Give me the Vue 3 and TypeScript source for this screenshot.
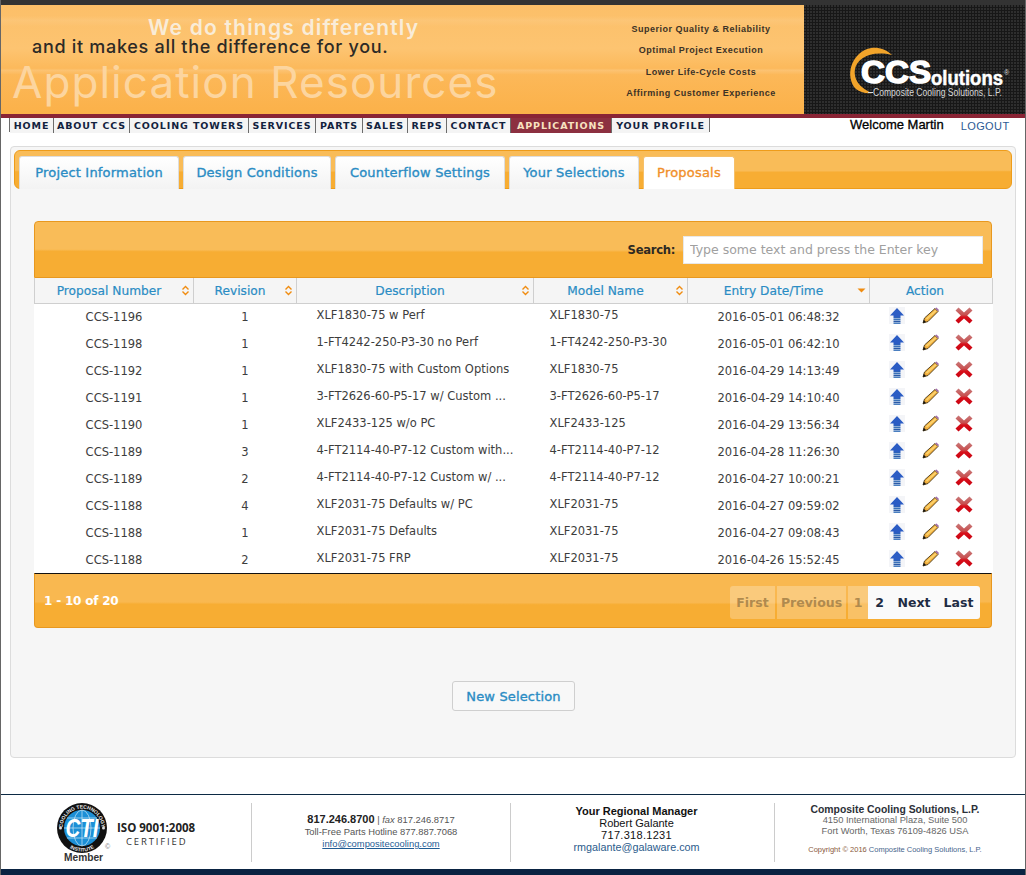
<script setup lang="ts">
interface Proposal {
  number: string
  revision: number
  description: string
  model: string
  entry: string
}

const navItems = ['HOME', 'ABOUT CCS', 'COOLING TOWERS', 'SERVICES', 'PARTS', 'SALES', 'REPS', 'CONTACT', 'APPLICATIONS', 'YOUR PROFILE']
const tabs = ['Project Information', 'Design Conditions', 'Counterflow Settings', 'Your Selections', 'Proposals']
const columns = ['Proposal Number', 'Revision', 'Description', 'Model Name', 'Entry Date/Time', 'Action']
const taglines = ['Superior Quality & Reliability', 'Optimal Project Execution', 'Lower Life-Cycle Costs', 'Affirming Customer Experience']

const rows: Proposal[] = [
  { number: 'CCS-1196', revision: 1, description: 'XLF1830-75 w Perf', model: 'XLF1830-75', entry: '2016-05-01 06:48:32' },
  { number: 'CCS-1198', revision: 1, description: '1-FT4242-250-P3-30 no Perf', model: '1-FT4242-250-P3-30', entry: '2016-05-01 06:42:10' },
  { number: 'CCS-1192', revision: 1, description: 'XLF1830-75 with Custom Options', model: 'XLF1830-75', entry: '2016-04-29 14:13:49' },
  { number: 'CCS-1191', revision: 1, description: '3-FT2626-60-P5-17 w/ Custom ...', model: '3-FT2626-60-P5-17', entry: '2016-04-29 14:10:40' },
  { number: 'CCS-1190', revision: 1, description: 'XLF2433-125 w/o PC', model: 'XLF2433-125', entry: '2016-04-29 13:56:34' },
  { number: 'CCS-1189', revision: 3, description: '4-FT2114-40-P7-12 Custom with...', model: '4-FT2114-40-P7-12', entry: '2016-04-28 11:26:30' },
  { number: 'CCS-1189', revision: 2, description: '4-FT2114-40-P7-12 Custom w/ ...', model: '4-FT2114-40-P7-12', entry: '2016-04-27 10:00:21' },
  { number: 'CCS-1188', revision: 4, description: 'XLF2031-75 Defaults w/ PC', model: 'XLF2031-75', entry: '2016-04-27 09:59:02' },
  { number: 'CCS-1188', revision: 1, description: 'XLF2031-75 Defaults', model: 'XLF2031-75', entry: '2016-04-27 09:08:43' },
  { number: 'CCS-1188', revision: 2, description: 'XLF2031-75 FRP', model: 'XLF2031-75', entry: '2016-04-26 15:52:45' },
]
</script>

<template>
  <div class="page">
    <div class="topbar"></div>

    <header class="banner">
      <div class="banner-art">
        <div class="slogan">
          <div class="slogan-a">We do things differently</div>
          <div class="slogan-b">and it makes all the difference for you.</div>
          <div class="slogan-c">Application Resources</div>
        </div>
        <ul class="taglines">
          <li v-for="t in taglines" :key="t">{{ t }}</li>
        </ul>
      </div>
      <div class="banner-logo">
        <svg width="221" height="109" viewBox="0 0 221 109">
          <path d="M88 50 C78 41 64 40 54 50 C44 60 44 76 52 84 C56 87 62 89 68 88 C58 84 49 76 51 64 C53 54 66 45 88 50Z" fill="#f2a42a" />
          <text x="57" y="78" class="logo-ccs" textLength="70" lengthAdjust="spacingAndGlyphs">CCS</text>
          <text x="127" y="80" class="logo-sol" textLength="72" lengthAdjust="spacingAndGlyphs">olutions</text>
          <text x="200" y="70" class="logo-reg">®</text>
          <rect x="64" y="87" width="5" height="1" fill="#ddd" />
          <text x="69" y="91" class="logo-sub" textLength="129" lengthAdjust="spacingAndGlyphs">Composite Cooling Solutions, L.P.</text>
        </svg>
      </div>
    </header>
    <div class="redline"></div>

    <div class="navrow">
      <nav class="mainnav">
        <a v-for="n in navItems" :key="n" :class="{ current: n === 'APPLICATIONS' }">{{ n }}</a>
      </nav>
      <div class="welcome">Welcome Martin</div>
      <a class="logout">LOGOUT</a>
    </div>

    <main class="panel">
      <div class="tabbar">
        <a v-for="t in tabs" :key="t" class="tab" :class="{ active: t === 'Proposals' }">{{ t }}</a>
      </div>

      <section class="grid-wrap">
        <div class="toolbar">
          <label class="search-label">Search:</label>
          <input class="search" type="text" placeholder="Type some text and press the Enter key" />
        </div>

        <table class="grid">
          <colgroup>
            <col style="width: 159px" />
            <col style="width: 103px" />
            <col style="width: 237px" />
            <col style="width: 154px" />
            <col style="width: 182px" />
            <col style="width: 123px" />
          </colgroup>
          <thead>
            <tr>
              <th v-for="c in columns" :key="c" :class="{ plain: c === 'Action' }">
                {{ c }}
                <svg v-if="c === 'Entry Date/Time'" class="sort" width="9" height="11" viewBox="0 0 9 11">
                  <path d="M0.500 3.500H8.500L4.500 7.500Z" fill="#f08c10" />
                </svg>
                <svg v-else-if="c !== 'Action'" class="sort" width="9" height="11" viewBox="0 0 9 11">
                  <path d="M1.500 4.500L4.500 1.500L7.500 4.500M1.500 6.500L4.500 9.500L7.500 6.500" fill="none" stroke="#f08c10" stroke-width="1.400" />
                </svg>
              </th>
            </tr>
          </thead>
          <tbody>
            <tr v-for="(r, i) in rows" :key="i">
              <td class="center">{{ r.number }}</td>
              <td class="center">{{ r.revision }}</td>
              <td class="desc">{{ r.description }}</td>
              <td class="model">{{ r.model }}</td>
              <td class="center">{{ r.entry }}</td>
              <td>
                <div class="actions">
                  <svg class="ico-up" width="16" height="17" viewBox="0 0 16 17">
                    <rect width="16" height="17" fill="#f4f5f8" />
                    <path d="M8 1L15 8.500H11.500V10H4.500V8.500H1Z" fill="#2b5cc4" />
                    <rect x="4.500" y="10" width="7" height="1.500" fill="#2b62b8" />
                    <rect x="4.500" y="12" width="7" height="1.500" fill="#3a72b8" />
                    <rect x="4.500" y="14" width="7" height="1.200" fill="#2b5aa8" />
                    <rect x="4.500" y="15.500" width="7" height="1.500" fill="#4a7fc0" />
                  </svg>
                  <svg width="18" height="17" viewBox="0 0 18 17">
                    <path d="M1 16L2.500 11L13 1.500L16 4.500L6 14.500Z" fill="#f2ae3c" stroke="#4a3a18" stroke-width="0.900" stroke-linejoin="round" />
                    <path d="M3.800 11.500L13.200 3L14.500 4.300L5 12.800Z" fill="#fbd36e" />
                    <path d="M1 16L1.800 12.800L4 15Z" fill="#111" />
                    <path d="M13 1.200L14.500 0.500L17 3L16.200 4.200Z" fill="#a06aa8" />
                  </svg>
                  <svg width="18" height="17" viewBox="0 0 18 17">
                    <defs>
                      <linearGradient :id="`xred${i}`" x1="0" y1="0" x2="0" y2="1">
                        <stop offset="0" stop-color="#c97a7a" />
                        <stop offset="0.450" stop-color="#c85050" />
                        <stop offset="0.600" stop-color="#d8101a" />
                        <stop offset="1" stop-color="#c80010" />
                      </linearGradient>
                    </defs>
                    <path d="M3.500 0.500L9 5.500L14.500 0.500L17.500 3.500L12.200 8.500L17.500 13.500L14.500 16.500L9 11.500L3.500 16.500L0.500 13.500L5.800 8.500L0.500 3.500Z" :fill="`url(#xred${i})`" />
                  </svg>
                </div>
              </td>
            </tr>
          </tbody>
        </table>

        <div class="pagerbar">
          <div class="count">1 - 10 of 20</div>
          <div class="pager">
            <a class="off first">First</a>
            <a class="off prev">Previous</a>
            <a class="off one">1</a>
            <a class="on two">2</a>
            <a class="on next">Next</a>
            <a class="on last">Last</a>
          </div>
        </div>
      </section>

      <div class="button-row">
        <button class="new-btn" type="button">New Selection</button>
      </div>
    </main>

    <footer class="foot">
      <div class="foot-cols">
        <div class="f-cert">
          <div class="cti">
            <svg width="56" height="54" viewBox="0 0 56 54">
              <defs>
                <path id="ctiTop" d="M5.500 25a19.500 19.500 0 0 1 39 0" />
                <path id="ctiBot" d="M1.500 25a23.500 23.500 0 0 0 47 0" />
              </defs>
              <circle cx="25" cy="25" r="25" fill="#111" />
              <circle cx="25" cy="25" r="18" fill="#1c8fd6" />
              <g fill="none" stroke="#cfe8f7" stroke-width="0.700">
                <ellipse cx="25" cy="25" rx="9" ry="18" />
                <path d="M25 7V43M7 25H43M10 15H40M10 35H40" />
              </g>
              <text x="25" y="34" class="cti-word" text-anchor="middle" textLength="33" lengthAdjust="spacingAndGlyphs">CTI</text>
              <text class="cti-ring"><textPath href="#ctiTop" startOffset="50%" text-anchor="middle">COOLING TECHNOLOGY</textPath></text>
              <text class="cti-ring"><textPath href="#ctiBot" startOffset="50%" text-anchor="middle">INSTITUTE</textPath></text>
              <circle cx="3.500" cy="25" r="1.500" fill="#ddd" />
              <circle cx="46.500" cy="25" r="1.500" fill="#ddd" />
              <text x="48" y="46" class="cti-c">©</text>
            </svg>
            <div class="member">Member</div>
          </div>
          <div class="iso">
            <div class="iso-a">ISO 9001:2008</div>
            <div class="iso-b">CERTIFIED</div>
          </div>
        </div>
        <div class="f-contact">
          <div><b>817.246.8700</b> | <i>fax</i> 817.246.8717</div>
          <div>Toll-Free Parts Hotline 877.887.7068</div>
          <a>info@compositecooling.com</a>
        </div>
        <div class="f-manager">
          <div class="strong">Your Regional Manager</div>
          <div>Robert Galante</div>
          <div class="phone">717.318.1231</div>
          <a>rmgalante@galaware.com</a>
        </div>
        <div class="f-company">
          <div class="co-name">Composite Cooling Solutions, L.P.</div>
          <div>4150 International Plaza, Suite 500</div>
          <div>Fort Worth, Texas 76109-4826 USA</div>
          <div class="copy">Copyright © 2016 <span>Composite Cooling Solutions, L.P.</span></div>
        </div>
      </div>
      <div class="foot-bar"></div>
    </footer>
  </div>
</template>

<style>
html,
body {
  margin: 0;
  background: #fff;
}
</style>

<style scoped>
.page {
  box-sizing: border-box;
  width: 1026px;
  height: 875px;
  display: flex;
  flex-direction: column;
  overflow: hidden;
  background: #fff;
  border-left: 1px solid #666;
  border-right: 1px solid #666;
  font-family: "DejaVu Sans", sans-serif;
}
.topbar {
  height: 5px;
  flex: none;
  background: #333;
}

/* banner */
.banner {
  height: 109px;
  flex: none;
  display: flex;
}
.banner-art {
  flex: 1;
  display: flex;
  justify-content: space-between;
  background:
    linear-gradient(180deg, transparent 58%, rgba(255, 255, 255, 0.14) 60%, transparent 64%),
    linear-gradient(180deg, transparent 10%, rgba(255, 255, 255, 0.08) 14%, transparent 20%),
    linear-gradient(180deg, #fcbf68 0%, #fdc471 40%, #fcb95b 58%, #fbb149 100%);
}
.slogan {
  font-family: Inter, sans-serif;
}
.slogan-a {
  margin-top: 12px;
  padding-left: 147px;
  height: 22px;
  font-size: 21px;
  line-height: 22px;
  font-weight: 600;
  letter-spacing: 1.200px;
  color: #f9ecd8;
  white-space: nowrap;
}
.slogan-b {
  padding-left: 31px;
  height: 14px;
  font-size: 18px;
  line-height: 16px;
  font-weight: 500;
  letter-spacing: 0.700px;
  color: #2d2a26;
  white-space: nowrap;
}
.slogan-c {
  margin-top: 4px;
  padding-left: 11px;
  font-size: 44px;
  line-height: 50px;
  font-weight: 400;
  letter-spacing: 1.050px;
  color: #fcd59f;
  white-space: nowrap;
}
.taglines {
  list-style: none;
  margin: 14px 0 0;
  padding: 0 3px 0 0;
  width: 200px;
  text-align: center;
  font-family: "Liberation Sans", sans-serif;
  font-size: 9px;
  font-weight: 700;
  letter-spacing: 0.500px;
  line-height: 21.300px;
  color: #3c3226;
}
.banner-logo {
  width: 221px;
  flex: none;
  background-color: #171717;
  background-image: radial-gradient(circle at 1px 1px, #2e2e2e 0.8px, transparent 1.200px);
  background-size: 3px 3px;
}
.logo-ccs {
  font-family: "Liberation Sans", sans-serif;
  font-weight: 700;
  font-size: 32px;
  fill: #fff;
  stroke: #fff;
  stroke-width: 1.500px;
}
.logo-sol {
  font-family: "Liberation Sans", sans-serif;
  font-weight: 700;
  font-size: 20px;
  fill: #fff;
  stroke: #fff;
  stroke-width: 0.500px;
}
.logo-reg {
  font-family: "Liberation Sans", sans-serif;
  font-size: 7px;
  fill: #ddd;
}
.logo-sub {
  font-family: "Liberation Sans", sans-serif;
  font-size: 10px;
  fill: #d8d8d8;
}
.redline {
  height: 4px;
  flex: none;
  background: #8a2435;
}

/* nav */
.navrow {
  height: 14px;
  flex: none;
  display: flex;
  align-items: flex-start;
  padding-left: 8px;
}
.mainnav {
  display: grid;
  grid-template-columns: 44px 76px 119px 67px 47px 45px 39px 64px 101px 97px;
  height: 14px;
  box-sizing: border-box;
  width: 701px;
  border: 1px solid #6c6c6c;
  border-top: 0;
  font-size: 9.500px;
  font-weight: 700;
  letter-spacing: 0.900px;
  color: #12223e;
}
.mainnav a {
  line-height: 15px;
  text-align: center;
  white-space: nowrap;
  background: #f4f4f4;
  border-right: 1px solid #6c6c6c;
}
.mainnav a:last-child {
  border-right: 0;
}
.mainnav a.current {
  background: #8c3040;
  color: #f8e2c0;
}
.welcome {
  margin-left: 140px;
  margin-top: -1px;
  font-family: "Liberation Sans", sans-serif;
  font-size: 13px;
  -webkit-text-stroke: 0.300px #000;
  color: #000;
  white-space: nowrap;
}
.logout {
  margin-left: 17px;
  margin-top: 2px;
  font-family: "Liberation Sans", sans-serif;
  font-size: 11px;
  letter-spacing: 0.400px;
  color: #2c5a94;
}

/* panel */
.panel {
  box-sizing: border-box;
  height: 612px;
  width: 1006px;
  flex: none;
  margin: 14px 0 0 9px;
  padding: 3px;
  background: #f6f6f6;
  border: 1px solid #dcdcdc;
  border-radius: 4px;
}
.tabbar {
  box-sizing: border-box;
  height: 39px;
  width: 998px;
  display: flex;
  gap: 4px;
  padding: 5px 0 0 4px;
  border: 1px solid #ee9c1a;
  border-radius: 6px;
  background: radial-gradient(ellipse 200% 58% at 50% 0, #f9bc58 93%, #f7ad33 100%);
}
.tab {
  box-sizing: border-box;
  height: 33px;
  font-size: 13px;
  line-height: 31px;
  text-align: center;
  letter-spacing: 0.200px;
  -webkit-text-stroke: 0.350px currentColor;
  white-space: nowrap;
  color: #2a8cc4;
  background: linear-gradient(180deg, #fff, #f3f3f3);
  border: 1px solid #ddd;
  border-bottom: 0;
  border-radius: 3px 3px 0 0;
}
.tab:nth-child(1) {
  width: 160px;
}
.tab:nth-child(2) {
  width: 148px;
}
.tab:nth-child(3) {
  width: 170px;
}
.tab:nth-child(4) {
  width: 130px;
}
.tab:nth-child(5) {
  width: 92px;
}
.tab.active {
  color: #f1902a;
  background: #fff;
  border-color: #f6c06a;
}

.grid-wrap {
  width: 958px;
  margin: 32px 0 0 20px;
}
.toolbar {
  box-sizing: border-box;
  height: 57px;
  display: flex;
  align-items: center;
  justify-content: flex-end;
  padding: 0 8px 0 0;
  border: 1px solid #e8981f;
  border-radius: 4px 4px 0 0;
  background: radial-gradient(ellipse 200% 55% at 50% 0, #f9bc58 93%, #f7ad33 100%);
}
.search-label {
  font-size: 11.600px;
  font-weight: 700;
  color: #2f2a22;
  margin-right: 8px;
  letter-spacing: -0.300px;
}
.search {
  box-sizing: border-box;
  width: 300px;
  height: 28px;
  padding: 0 6px;
  border: 1px solid #e8e8e8;
  outline: 0;
  background: #fff;
  font-family: "DejaVu Sans", sans-serif;
  font-size: 12.500px;
}
.search::placeholder {
  color: #a0a0a0;
  opacity: 1;
}

.grid {
  width: 958px;
  table-layout: fixed;
  border-collapse: collapse;
  background: #fff;
}
.grid th {
  position: relative;
  box-sizing: border-box;
  height: 25px;
  padding: 1px 10px 0 0;
  font-size: 12.200px;
  font-weight: 400;
  color: #2a8cc4;
  text-align: center;
  background: #f5f5f5;
  border: 1px solid #cfcfcf;
  border-top: 0;
  -webkit-text-stroke: 0.200px #2a8cc4;
}
.grid th.plain {
  padding-right: 12px;
}
.sort {
  position: absolute;
  right: 3px;
  top: 7px;
}
.grid td {
  height: 27px;
  padding: 0;
  font-size: 11.500px;
  color: #3d3d3d;
  white-space: nowrap;
  box-sizing: border-box;
}
.grid td.center {
  text-align: center;
  padding-top: 1px;
}
.grid td.desc {
  padding: 0 0 3px 20px;
}
.grid td.model {
  padding: 0 0 3px 16px;
}
.actions {
  box-sizing: border-box;
  display: flex;
  align-items: center;
  gap: 15px;
  padding: 0 0 2px 19px;
  height: 24px;
}
.ico-up {
  margin-right: 2px;
}
.pagerbar {
  box-sizing: border-box;
  height: 55px;
  display: flex;
  align-items: center;
  justify-content: space-between;
  padding: 0 11px 0 9px;
  border: 1px solid #e8981f;
  border-top: 1px solid #111;
  border-radius: 0 0 4px 4px;
  background: radial-gradient(ellipse 200% 58% at 50% 0, #f9b850 93%, #f7ad33 100%);
}
.count {
  font-size: 12px;
  font-weight: 700;
  color: #fff;
  letter-spacing: -0.200px;
}
.pager {
  display: flex;
  height: 33px;
  margin-top: 4px;
  font-size: 12.500px;
  font-weight: 700;
  line-height: 33px;
}
.pager a {
  box-sizing: border-box;
  text-align: center;
}
.pager .off {
  color: #b08a4e;
  background: rgba(255, 255, 255, 0.25);
  margin-right: 2px;
}
.pager .first {
  width: 45px;
  border-radius: 3px 0 0 3px;
}
.pager .prev {
  width: 69px;
}
.pager .off.one {
  width: 20px;
  margin-right: 0;
}
.pager .on {
  color: #1f2c44;
  background: #fafafa;
}
.pager .two {
  width: 23px;
}
.pager .next {
  width: 46px;
}
.pager .last {
  width: 43px;
  border-radius: 0 3px 3px 0;
}
.button-row {
  display: flex;
  justify-content: center;
  margin-top: 53px;
  padding-left: 1px;
}
.new-btn {
  box-sizing: border-box;
  width: 123px;
  height: 30px;
  padding: 0;
  font-family: "DejaVu Sans", sans-serif;
  font-size: 13px;
  letter-spacing: 0.150px;
  -webkit-text-stroke: 0.350px #2a8cc4;
  color: #2a8cc4;
  background: #f8f8f8;
  border: 1px solid #cfcfcf;
  border-radius: 3px;
}

/* footer */
.foot {
  margin-top: auto;
  flex: none;
  font-family: "Liberation Sans", sans-serif;
}
.foot-cols {
  box-sizing: border-box;
  height: 75px;
  display: grid;
  grid-template-columns: 250px 259px 264px 1fr;
  padding-top: 8px;
  border-top: 1px solid #0c2a44;
}
.foot-cols > div {
  height: 59px;
  box-sizing: border-box;
  text-align: center;
}
.f-contact,
.f-manager,
.f-company {
  border-left: 1px solid #ccc;
}
.foot-cols > .f-cert {
  display: flex;
  text-align: left;
  padding-left: 56px;
}
.cti {
  width: 50px;
  position: relative;
}
.cti svg {
  display: block;
  overflow: visible;
}
.cti-word {
  font-family: "Liberation Sans", sans-serif;
  font-size: 25px;
  font-weight: 700;
  font-style: italic;
  fill: #fff;
}
.cti-ring {
  font-family: "Liberation Sans", sans-serif;
  font-size: 5px;
  font-weight: 700;
  fill: #eee;
}
.cti-c {
  font-size: 7px;
  fill: #777;
  font-family: "Liberation Sans", sans-serif;
}
.member {
  position: absolute;
  top: 49px;
  left: 7px;
  font-size: 10.200px;
  font-weight: 700;
  color: #333;
}
.iso {
  margin: 18px 0 0 10px;
}
.iso-a {
  font-family: "Open Sans", sans-serif;
  font-size: 11.500px;
  line-height: 14px;
  font-weight: 700;
  color: #222;
  white-space: nowrap;
}
.iso-b {
  padding-left: 9px;
  font-family: "Open Sans", sans-serif;
  font-size: 9.500px;
  line-height: 13px;
  letter-spacing: 1.850px;
  color: #333;
}
.f-contact {
  padding-top: 10px;
  font-size: 9.400px;
  line-height: 12px;
  color: #555;
}
.f-contact b {
  font-size: 11px;
  color: #222;
}
.f-contact a {
  color: #1f5c94;
  text-decoration: underline;
}
.foot-cols > .f-manager {
  padding: 2px 12px 0 0;
  font-size: 11px;
  line-height: 12px;
  color: #111;
}
.f-manager .strong {
  font-weight: 700;
}
.f-manager .phone {
  letter-spacing: 0.300px;
}
.f-manager a {
  font-size: 10.800px;
  color: #2c5c8c;
}
.foot-cols > .f-company {
  padding: 1px 10px 0 0;
  font-size: 9.300px;
  line-height: 11px;
  color: #666;
}
.f-company .co-name {
  font-size: 10.400px;
  font-weight: 700;
  color: #2c3038;
}
.f-company .copy {
  margin-top: 7px;
  font-size: 7.500px;
  color: #8a5a3c;
}
.f-company .copy span {
  color: #46658c;
}
.foot-bar {
  height: 6px;
  background: #0a2342;
}
</style>
